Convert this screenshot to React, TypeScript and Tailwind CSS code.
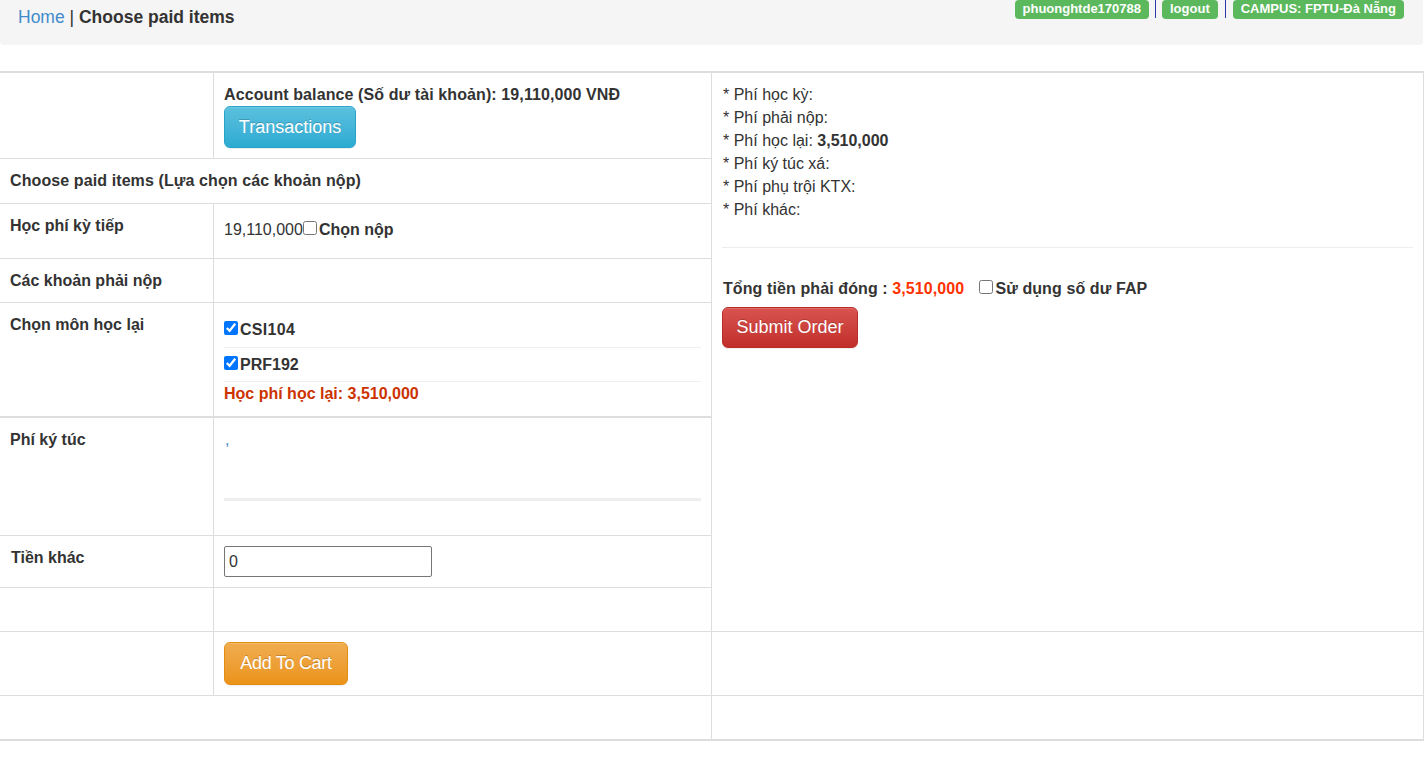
import React from 'react'

const font = "font-['Liberation_Sans',Arial,sans-serif]"

const btnBase =
  'inline-flex items-center justify-center rounded-[6px] border text-[18px] text-white [text-shadow:0_-1px_0_rgba(0,0,0,0.2)] shadow-[inset_0_1px_0_rgba(255,255,255,0.15),0_1px_1px_rgba(0,0,0,0.075)]'

const summary = [
  { label: 'Phí học kỳ:' },
  { label: 'Phí phải nộp:' },
  { label: 'Phí học lại:', value: '3,510,000' },
  { label: 'Phí ký túc xá:' },
  { label: 'Phí phụ trội KTX:' },
  { label: 'Phí khác:' },
]

function Check({ checked = false }: { checked?: boolean }) {
  return (
    <input
      type="checkbox"
      defaultChecked={checked}
      className="m-0 h-[14px] w-[14px] align-baseline"
    />
  )
}

function Label({ children }: { children: React.ReactNode }) {
  return (
    <span className="h-[19px] rounded-[4px] bg-[#5cb85c] px-[8px] pb-[2px] text-[13px] font-bold leading-[17px] text-white">
      {children}
    </span>
  )
}

export default function App() {
  return (
    <div className={`${font} min-h-[766px] bg-white text-[16px] leading-[23px] text-[#333]`}>
      {/* Header / breadcrumb */}
      <div className="flex h-[45px] w-[1423px] justify-between rounded-b-[4px] bg-[#f5f5f5]">
        <div className="pl-[18px] pt-[5px] text-[17.5px] leading-[25px]">
          <span className="text-[#428bca]">Home</span> | <span className="font-bold">Choose paid items</span>
        </div>
        <div className="flex items-start pr-[19px]">
          <Label>phuonghtde170788</Label>
          <span className="mx-[6px] h-[18px] w-px bg-[#2b3aa8]" />
          <Label>logout</Label>
          <span className="mx-[7px] h-[18px] w-px bg-[#2b3aa8]" />
          <Label>CAMPUS: FPTU-Đà Nẵng</Label>
        </div>
      </div>

      {/* Main table */}
      <div className="mt-[26px] w-[1424px] border-y-2 border-r border-[#ddd]">
        <div className="flex">
          {/* Left: paid items */}
          <div className="w-[712px] shrink-0 border-r border-[#ddd]">
            <div className="flex h-[86px] border-b border-[#ddd]">
              <div className="w-[214px] shrink-0 border-r border-[#ddd]" />
              <div className="flex-1 px-[10px] pt-[10px]">
                <div className="font-bold tracking-[0.1px]">Account balance (Số dư tài khoản): 19,110,000 VNĐ</div>
                <button className={`${btnBase} h-[42px] w-[132px] border-[#28a4c9] bg-linear-to-b from-[#5bc0de] to-[#2aabd2]`}>
                  Transactions
                </button>
              </div>
            </div>

            <div className="h-[45px] border-b border-[#ddd] px-[10px] pt-[10px] font-bold tracking-[0.1px]">
              Choose paid items (Lựa chọn các khoản nộp)
            </div>

            <div className="flex h-[55px] border-b border-[#ddd]">
              <div className="w-[214px] shrink-0 border-r border-[#ddd] px-[10px] pt-[10px] font-bold">Học phí kỳ tiếp</div>
              <div className="flex-1 px-[10px] pt-[14px]">
                19,110,000<Check /><span className="ml-[2px] font-bold">Chọn nộp</span>
              </div>
            </div>

            <div className="flex h-[44px] border-b border-[#ddd]">
              <div className="w-[214px] shrink-0 border-r border-[#ddd] px-[10px] pt-[10px] font-bold">Các khoản phải nộp</div>
              <div className="flex-1" />
            </div>

            <div className="flex h-[115px] border-b-2 border-[#ddd]">
              <div className="w-[214px] shrink-0 border-r border-[#ddd] px-[10px] pt-[10px] font-bold">Chọn môn học lại</div>
              <div className="flex-1 px-[10px] pt-[15px]">
                <div className="border-b border-[#eee] pb-[6px]">
                  <Check checked /><span className="ml-[2px] font-bold tracking-[0.3px]">CSI104</span>
                </div>
                <div className="border-b border-[#eee] pb-[5px] pt-[5px]">
                  <Check checked /><span className="ml-[2px] font-bold">PRF192</span>
                </div>
                <div className="font-bold text-[#cc3300]">Học phí học lại: 3,510,000</div>
              </div>
            </div>

            <div className="flex h-[118px] border-b border-[#ddd]">
              <div className="w-[214px] shrink-0 border-r border-[#ddd] px-[10px] pt-[10px] font-bold">Phí ký túc</div>
              <div className="flex-1 px-[10px] pt-[10px]">
                <div className="pl-px text-[#428bca]">,</div>
                <div className="mt-[47px] h-[3px] bg-[#eee]" />
              </div>
            </div>

            <div className="flex h-[52px] border-b border-[#ddd]">
              <div className="w-[214px] shrink-0 border-r border-[#ddd] pl-[11px] pr-[10px] pt-[10px] font-bold">Tiền khác</div>
              <div className="flex-1 px-[10px] pt-[10px]">
                <input
                  type="text"
                  defaultValue="0"
                  className={`${font} h-[31px] w-[208px] rounded-[2px] border border-[#767676] px-[4px] text-[16px] text-[#333]`}
                />
              </div>
            </div>

            <div className="flex h-[43px]">
              <div className="w-[214px] shrink-0 border-r border-[#ddd]" />
              <div className="flex-1" />
            </div>
          </div>

          {/* Right: summary */}
          <div className="flex-1 pl-[11px] pr-[10px] pt-[10px]">
            {summary.map((s) => (
              <div key={s.label}>
                * {s.label}
                {s.value && <span className="font-bold"> {s.value}</span>}
              </div>
            ))}
            <div className="-ml-px mt-[26px] border-t border-[#eee]" />
            <div className="mt-[29px] font-bold tracking-[0.1px]">
              Tổng tiền phải đóng : <span className="text-[#ff3300]">3,510,000</span>
              <span className="ml-[15px]"><Check /></span>
              <span className="ml-[2px]">Sử dụng số dư FAP</span>
            </div>
            <button className={`${btnBase} -ml-px mt-[7px] h-[41px] w-[136px] border-[#b92c28] bg-linear-to-b from-[#d9534f] to-[#c12e2a]`}>
              Submit Order
            </button>
          </div>
        </div>

        <div className="flex h-[64px] border-t border-[#ddd]">
          <div className="w-[214px] shrink-0 border-r border-[#ddd]" />
          <div className="w-[498px] shrink-0 border-r border-[#ddd] pl-[10px] pt-[10px]">
            <button className={`${btnBase} h-[43px] w-[124px] border-[#e38d13] bg-linear-to-b from-[#f0ad4e] to-[#eb9316] tracking-[-0.3px]`}>
              Add To Cart
            </button>
          </div>
          <div className="flex-1" />
        </div>

        <div className="flex h-[44px] border-t border-[#ddd]">
          <div className="w-[712px] shrink-0 border-r border-[#ddd]" />
          <div className="flex-1" />
        </div>
      </div>
    </div>
  )
}
